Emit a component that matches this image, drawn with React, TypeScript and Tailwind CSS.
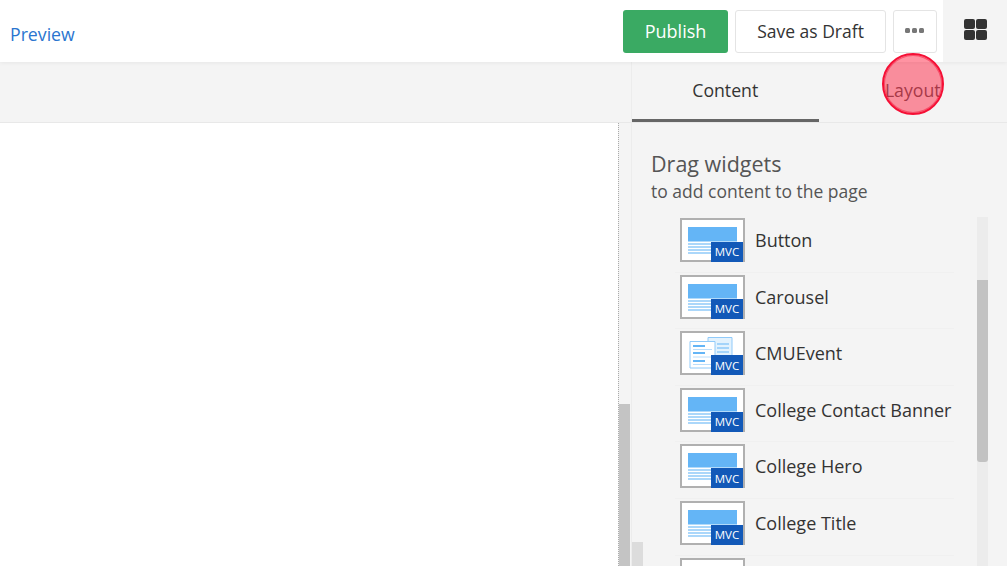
const widgets = [
  { name: 'Button', icon: 'block' },
  { name: 'Carousel', icon: 'block' },
  { name: 'CMUEvent', icon: 'docs' },
  { name: 'College Contact Banner', icon: 'block' },
  { name: 'College Hero', icon: 'block' },
  { name: 'College Title', icon: 'block' },
  { name: '', icon: 'block' },
];

const BlockIcon = () => (
  <svg width="61" height="40" viewBox="0 0 61 40" className="block">
    <rect x="6" y="7" width="49" height="14.5" fill="#64b5f6" />
    <path d="M6 24H30M6 27H30M6 30H30M6 33H30" stroke="#90caf9" strokeWidth="1.3" />
  </svg>
);

const DocsIcon = () => (
  <svg width="61" height="40" viewBox="0 0 61 40" className="block">
    <path d="M26 4.5H50V31H26Z" fill="#e3f2fd" stroke="#90caf9" />
    <path d="M8 8.5H33V35H8Z" fill="#fff" stroke="#90caf9" />
    <path d="M11 13H23M11 20H23M11 28H23" stroke="#64b5f6" strokeWidth="2" />
    <path d="M35 11H47M35 15H47M35 19H47M35 23H47" stroke="#90caf9" strokeWidth="1.3" />
    <path d="M11 16.5H30M11 24H30M11 31.5H30" stroke="#bbdefb" strokeWidth="1" />
  </svg>
);

const WidgetRow = ({ name, icon }: { name: string; icon: string }) => (
  <div className="ml-[43px] flex h-[56.6px] shrink-0 items-start gap-[10px] border-b border-[#f0f0f0] pl-[5px]">
    <div className="relative mt-[2px] h-[44px] w-[65px] shrink-0 border-2 border-[#b0b0b0] bg-white">
      {icon === 'docs' ? <DocsIcon /> : <BlockIcon />}
      {name && (
        <span className="absolute right-0 bottom-[-2px] flex h-[20px] w-[32px] items-center justify-center bg-[#1259b8] text-[11.5px] font-medium text-white">
          MVC
        </span>
      )}
    </div>
    {name && <span className="mt-[11px] text-[18px] leading-[26px] whitespace-nowrap text-[#333]">{name}</span>}
  </div>
);

export default function App() {
  return (
    <div className="relative flex h-[566px] w-[1007px] flex-col overflow-hidden bg-[#f4f4f4] font-['Open_Sans',sans-serif]">
      <header className="z-10 flex h-[62px] shrink-0 items-stretch bg-white shadow-[0_1px_4px_rgba(0,0,0,0.06)]">
        <a className="mt-[21px] ml-[10px] text-[17.7px] leading-[26px] text-[#2a75cf]">Preview</a>
        <div className="mt-[10px] ml-auto flex h-[43px] gap-[7px]">
          <button className="w-[105px] rounded-[3px] bg-[#3aaa63] text-[18px] text-white">Publish</button>
          <button className="w-[151px] rounded-[3px] border border-[#e4e4e4] bg-white text-[17.5px] text-[#333]">Save as Draft</button>
          <button className="flex w-[44px] items-center justify-center gap-[2px] rounded-[3px] border border-[#e4e4e4] bg-white pr-[1px] pb-[3px]">
            <span className="h-[5px] w-[5px] rounded-[1.5px] bg-[#777]" />
            <span className="h-[5px] w-[5px] rounded-[1.5px] bg-[#777]" />
            <span className="h-[5px] w-[5px] rounded-[1.5px] bg-[#777]" />
          </button>
        </div>
        <div className="ml-[6px] flex w-[64px] items-center justify-center bg-[#f4f4f4] pb-[4px]">
          <div className="grid grid-cols-2 gap-[1px]">
            <span className="h-[10px] w-[11px] rounded-[2px] bg-[#333]" />
            <span className="h-[10px] w-[11px] rounded-[2px] bg-[#333]" />
            <span className="h-[10px] w-[11px] rounded-[2px] bg-[#333]" />
            <span className="h-[10px] w-[11px] rounded-[2px] bg-[#333]" />
          </div>
        </div>
      </header>

      <div className="flex min-h-0 flex-1">
        <main className="flex w-[631px] shrink-0 flex-col">
          <div className="h-[61px] shrink-0 border-b border-[#e8e8e8]" />
          <div className="flex min-h-0 flex-1">
            <div className="w-[618px] bg-white" />
            <div className="flex w-[13px] flex-col justify-end border-l border-dotted border-[#aaa]">
              <div className="h-[162px] w-[11px] bg-[#c4c4c4]" />
            </div>
          </div>
        </main>

        <aside className="flex min-w-0 flex-1 flex-col border-l border-[#ececec]">
          <nav className="flex h-[61px] shrink-0 border-b border-[#e8e8e8]">
            <div className="flex w-[187px] items-center justify-center border-b-[3px] border-[#666] text-[17.7px] text-[#333]">
              Content
            </div>
            <div className="flex w-[189px] items-center justify-center pb-[3px] text-[17.7px] text-[#555]">Layout</div>
          </nav>
          <div className="relative min-h-0 flex-1">
            <div className="pt-[26px] pl-[19px]">
              <h2 className="text-[21.5px] leading-[30px] text-[#555]">Drag widgets</h2>
              <p className="text-[17.5px] leading-[24px] text-[#555]">to add content to the page</p>
            </div>
            <div className="mt-[13px] flex w-[322px] flex-col overflow-hidden">
              {widgets.map((w) => (
                <WidgetRow key={w.name} name={w.name} icon={w.icon} />
              ))}
            </div>
            <div className="absolute top-[94px] left-[345px] h-[350px] w-[11px] bg-[#ececec]">
              <div className="mt-[63px] h-[182px] rounded-b-[3px] bg-[#c2c2c2]" />
            </div>
            <div className="absolute bottom-0 left-0 h-[24px] w-[11px] bg-[#dcdcdc]" />
          </div>
        </aside>
      </div>

      <div className="absolute top-[53px] left-[882px] z-20 h-[62px] w-[62px] rounded-full border-2 border-[#f50f35] bg-[rgba(255,30,60,0.48)] shadow-[inset_0_0_0_1px_rgba(245,15,53,0.5)]" />
    </div>
  );
}
